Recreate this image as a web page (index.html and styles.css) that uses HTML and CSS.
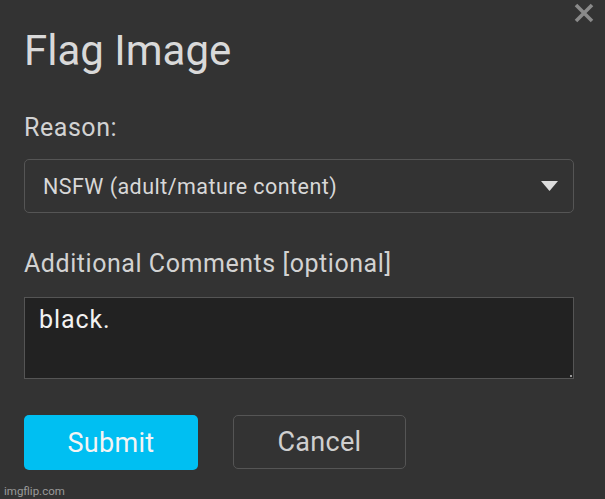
FILE: index.html
```html
<!DOCTYPE html>
<html>
<head>
<meta charset="utf-8">
<link rel="stylesheet" href="styles.css">
</head>
<body>
<div class="dialog">
  <button class="close" aria-label="Close">
    <svg width="20" height="20" viewBox="0 0 20 20"><path d="M2 2 L18 18 M18 2 L2 18" stroke="#8a8a8a" stroke-width="3.6" stroke-linecap="butt"/></svg>
  </button>
  <h1 class="title">Flag Image</h1>
  <div class="label">Reason:</div>
  <div class="select">
    <span class="select-text">NSFW (adult/mature content)</span>
    <svg class="caret" width="17" height="10" viewBox="0 0 17 10"><path d="M0 0 H17 L8.5 10 Z" fill="#dcdcdc"/></svg>
  </div>
  <div class="label label2">Additional Comments [optional]</div>
  <div class="textarea">black.<span class="grip"></span></div>
  <div class="actions">
    <button class="btn btn-submit">Submit</button>
    <button class="btn btn-cancel">Cancel</button>
  </div>
  <div class="watermark">imgflip.com</div>
</div>
</body>
</html>
```
FILE: styles.css
```css
html, body {
  margin: 0;
  padding: 0;
  background: #333333;
  font-family: Roboto, "Noto Sans", sans-serif;
}
.dialog {
  position: relative;
  width: 605px;
  height: 499px;
  box-sizing: border-box;
  padding: 27px 31px 0 24px;
  display: flex;
  flex-direction: column;
}
.close {
  position: absolute;
  top: 3px;
  left: 574px;
  background: none;
  border: 0;
  padding: 0;
  width: 20px;
  height: 20px;
  line-height: 0;
}
.title {
  margin: 0;
  font-weight: 400;
  font-size: 42px;
  line-height: 48px;
  color: #d9d9d9;
}
.label {
  margin-top: 38px;
  font-size: 25px;
  line-height: 30px;
  letter-spacing: 0.55px;
  color: #d2d2d2;
}
.select {
  margin-top: 16px;
  height: 54px;
  box-sizing: border-box;
  border: 1px solid #555;
  border-radius: 5px;
  display: flex;
  align-items: center;
  justify-content: space-between;
  padding: 0 15px 0 18px;
}
.select-text {
  font-size: 21.5px;
  letter-spacing: 0.45px;
  color: #d8d8d8;
}
.label2 {
  margin-top: 36px;
}
.textarea {
  position: relative;
  margin-top: 18px;
  height: 82px;
  box-sizing: border-box;
  background: #222;
  border: 1px solid #555;
  padding: 6px 14px;
  font-size: 25px;
  line-height: 32px;
  letter-spacing: 0.9px;
  color: #f2f2f2;
}
.grip {
  position: absolute;
  right: 1px;
  bottom: 1px;
  width: 2px;
  height: 2px;
  background: #999;
}
.actions {
  margin-top: 36px;
  display: flex;
  gap: 35px;
}
.btn {
  height: 55px;
  border-radius: 5px;
  font-family: Roboto, "Noto Sans", sans-serif;
  font-size: 27px;
  letter-spacing: 0.3px;
  padding: 0;
}
.btn-submit {
  width: 174px;
  background: #00bff2;
  border: 0;
  color: #f4f4f4;
}
.btn-cancel {
  width: 173px;
  height: 54px;
  background: transparent;
  border: 1px solid #555;
  color: #cfcfcf;
}
.watermark {
  position: absolute;
  left: 4px;
  top: 484px;
  font-size: 11.5px;
  color: #9a9a9a;
}
```
